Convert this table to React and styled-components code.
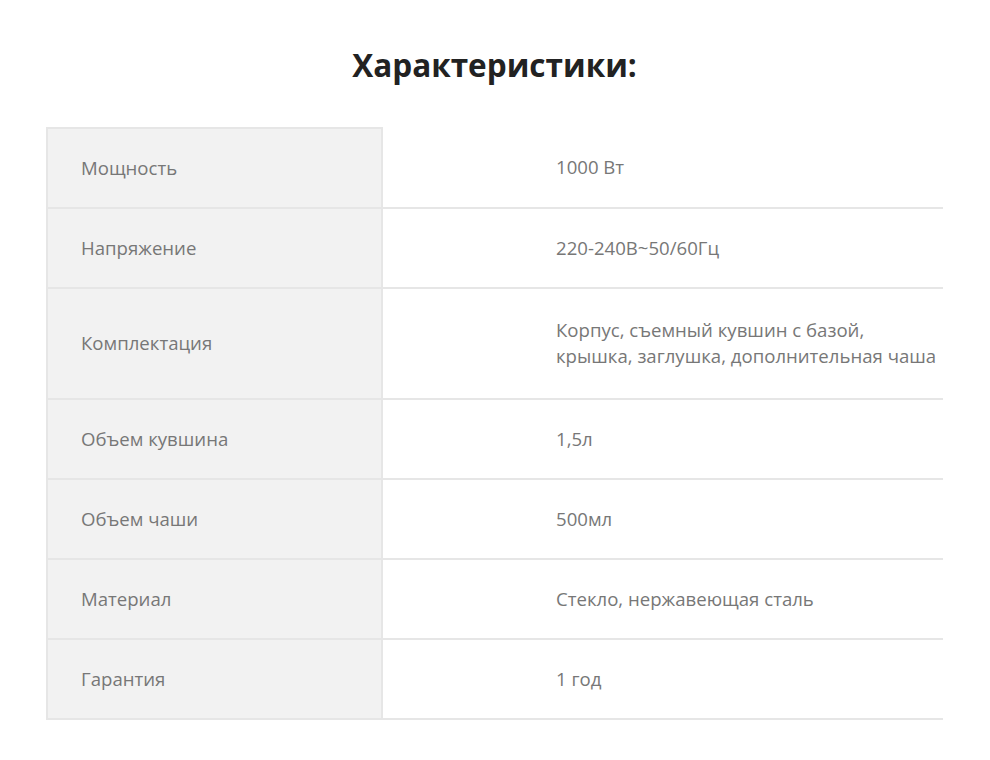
import styled, { createGlobalStyle } from "styled-components";

const specs = [
  { name: "Мощность", value: ["1000 Вт"] },
  { name: "Напряжение", value: ["220-240В~50/60Гц"] },
  { name: "Комплектация", value: ["Корпус, съемный кувшин с базой,", "крышка, заглушка, дополнительная чаша"] },
  { name: "Объем кувшина", value: ["1,5л"] },
  { name: "Объем чаши", value: ["500мл"] },
  { name: "Материал", value: ["Стекло, нержавеющая сталь"] },
  { name: "Гарантия", value: ["1 год"] },
];

export default function App() {
  return (
    <Page>
      <GlobalStyle />
      <Title>Характеристики:</Title>
      <Table>
        {specs.map((row, i) => (
          <Row key={row.name}>
            <Label $first={i === 0} $tall={row.value.length > 1}>{row.name}</Label>
            <Value $tall={row.value.length > 1}>
              {row.value.map((line) => (
                <span key={line}>{line}</span>
              ))}
            </Value>
          </Row>
        ))}
      </Table>
    </Page>
  );
}

const GlobalStyle = createGlobalStyle`
body {
  margin: 0;
  background: #ffffff;
  font-family: "Open Sans", "Liberation Sans", sans-serif;
}`;

const Page = styled.main`
width: 990px;
height: 760px;
padding: 45px 47px 0 46px;
box-sizing: border-box;
display: flex;
flex-direction: column;`;

const Title = styled.h1`
margin: 0 0 42px;
text-align: center;
font-size: 31.5px;
line-height: 40px;
font-weight: 700;
color: #222222;`;

const Table = styled.section`
display: flex;
flex-direction: column;`;

const Row = styled.div`
display: grid;
grid-template-columns: 337px 1fr;
font-size: 18.6px;
line-height: 26px;
color: #777777;`;

const Cell = styled.div`
display: flex;
flex-direction: column;
justify-content: center;
border-bottom: 2px solid #e6e6e6;
padding: ${(p) => (p.$tall ? "28px 0 29px" : "26px 0")};`;

const Label = styled(Cell)`
background: #f2f2f2;
border-left: 2px solid #e6e6e6;
border-right: 2px solid #e6e6e6;
border-top: ${(p) => (p.$first ? "2px solid #e6e6e6" : "none")};
padding-left: 33px;`;

const Value = styled(Cell)`
padding-left: 173px;`;
